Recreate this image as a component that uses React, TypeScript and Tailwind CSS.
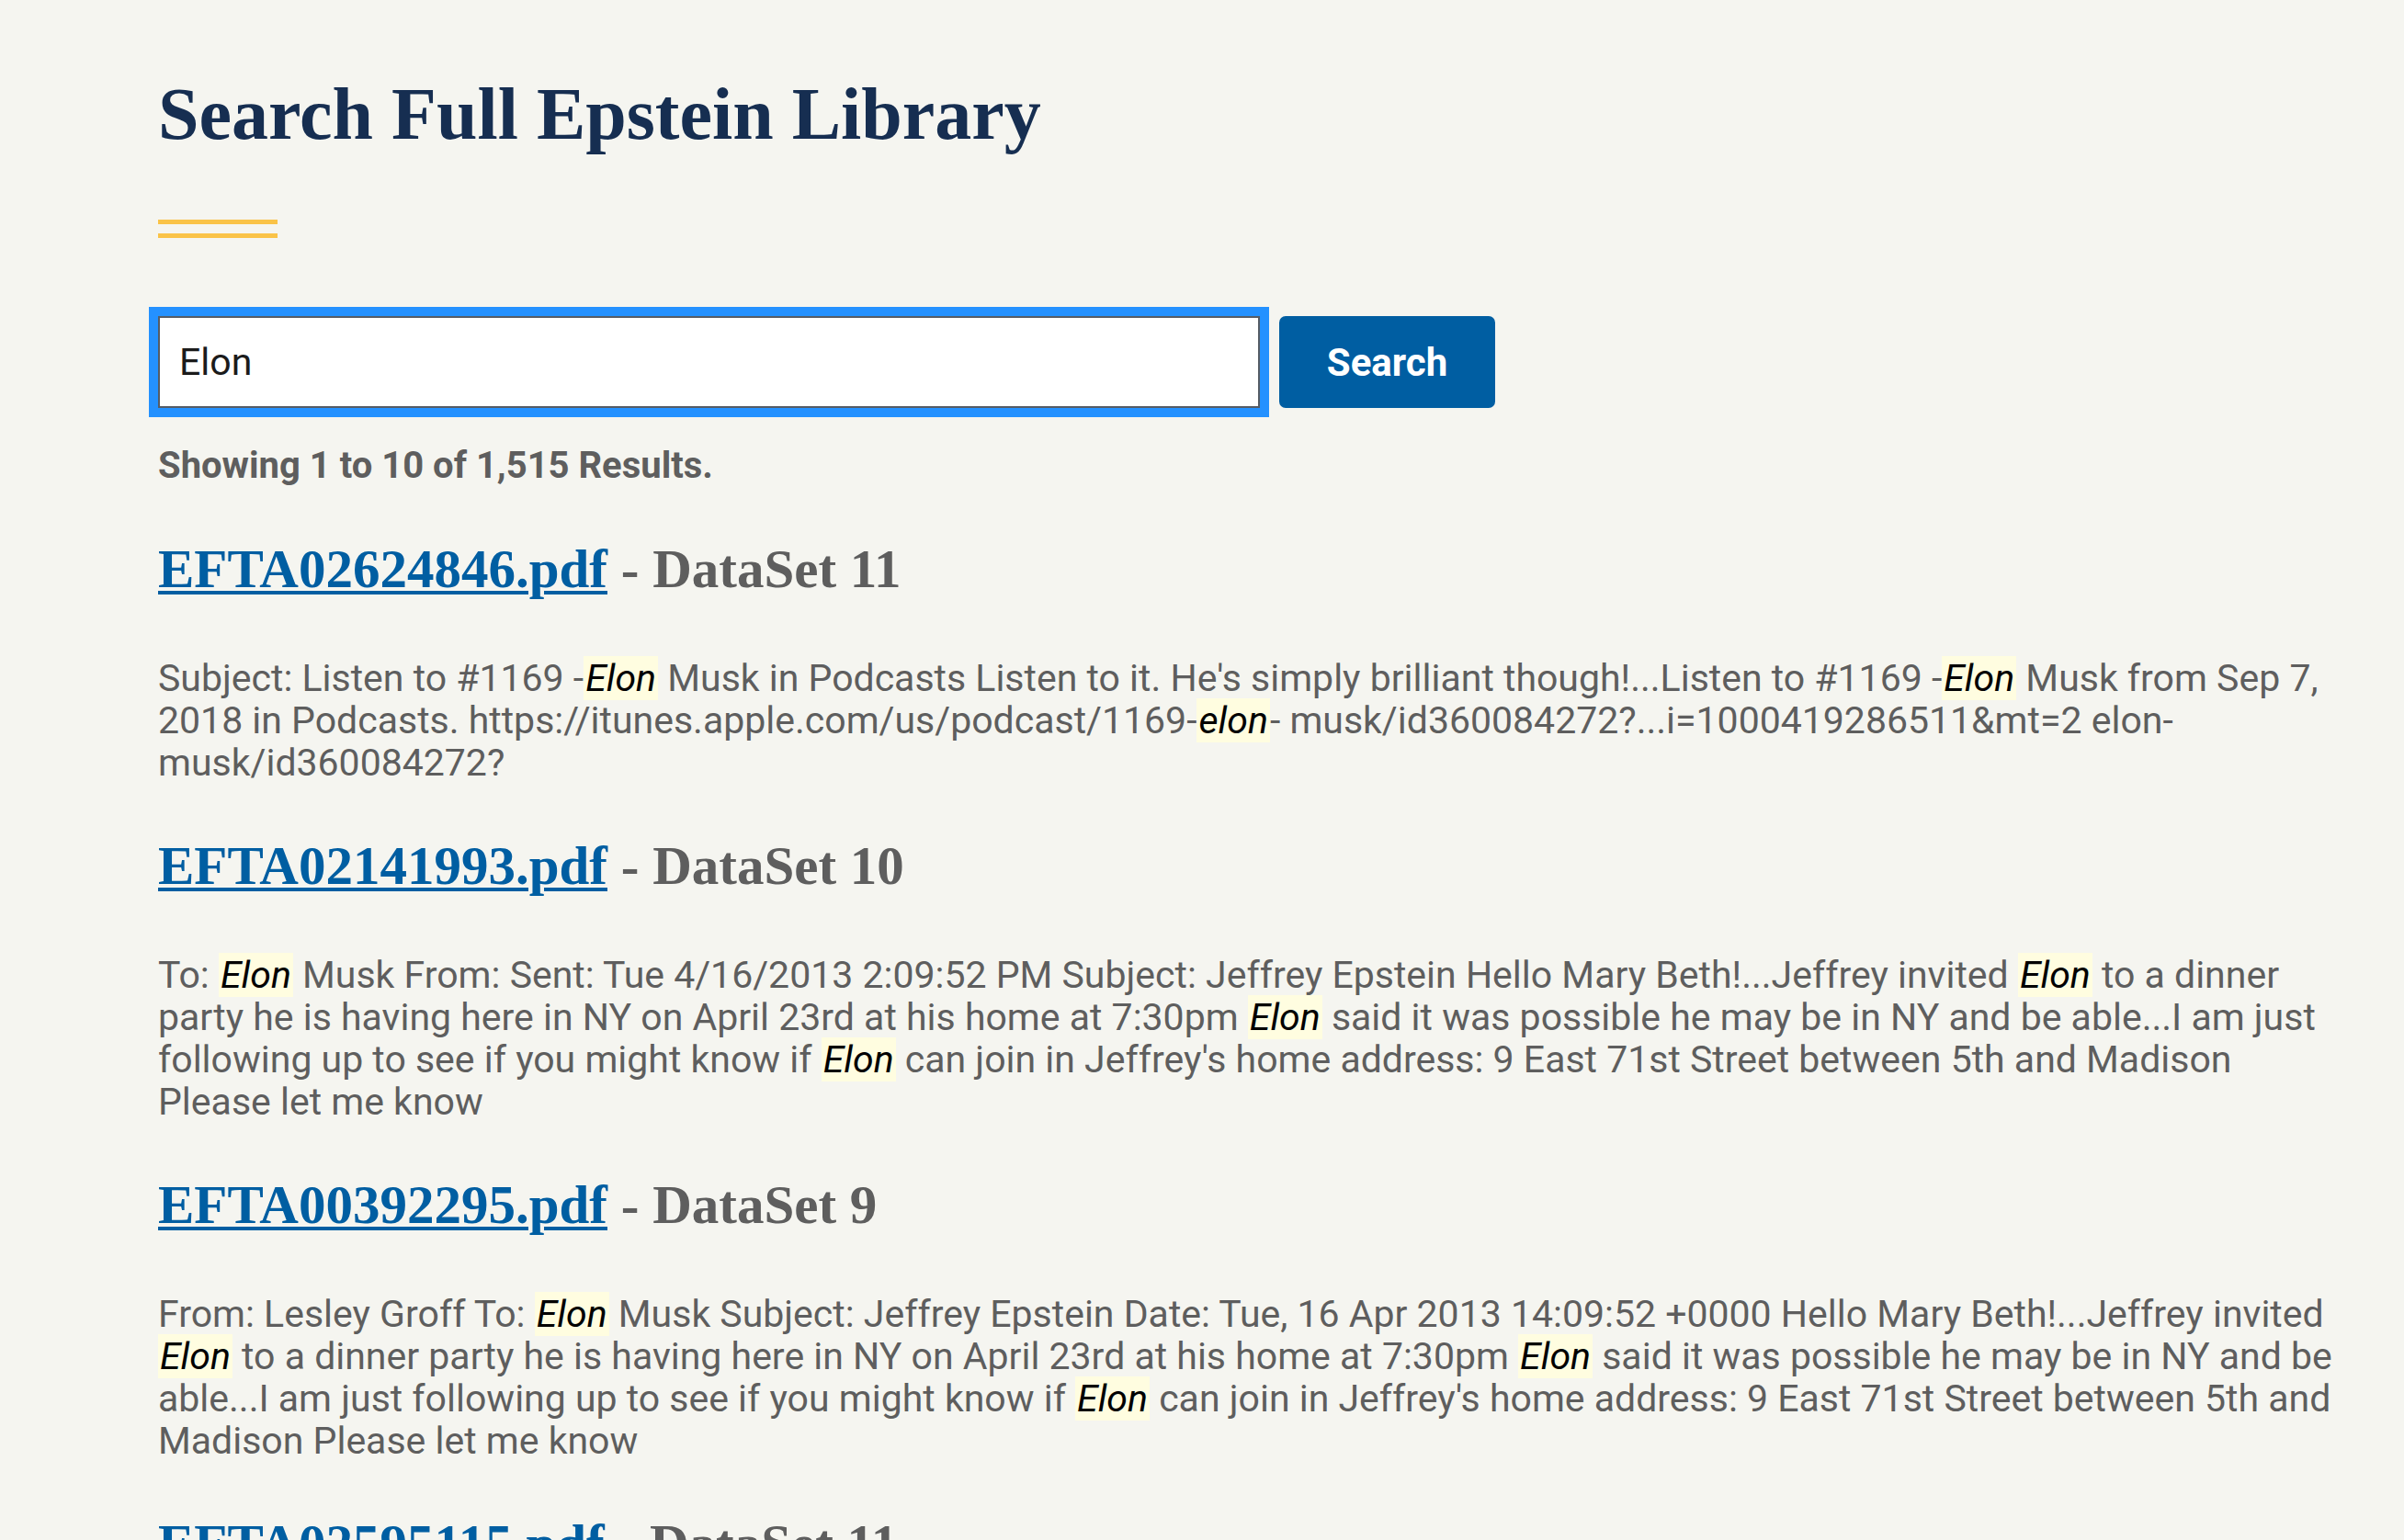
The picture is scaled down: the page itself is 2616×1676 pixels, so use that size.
import React from 'react';

type Part = string | { hl: string };

const results: { file: string; dataset: string; parts: Part[] }[] = [
  {
    file: 'EFTA02624846.pdf',
    dataset: 'DataSet 11',
    parts: [
      'Subject: Listen to #1169 -',
      { hl: 'Elon' },
      " Musk in Podcasts Listen to it. He's simply brilliant though!...Listen to #1169 -",
      { hl: 'Elon' },
      ' Musk from Sep 7, 2018 in Podcasts. https://itunes.apple.com/us/podcast/1169-',
      { hl: 'elon' },
      '- musk/id360084272?...i=1000419286511&mt=2 elon-musk/id360084272?',
    ],
  },
  {
    file: 'EFTA02141993.pdf',
    dataset: 'DataSet 10',
    parts: [
      'To: ',
      { hl: 'Elon' },
      ' Musk From: Sent: Tue 4/16/2013 2:09:52 PM Subject: Jeffrey Epstein Hello Mary Beth!...Jeffrey invited ',
      { hl: 'Elon' },
      ' to a dinner party he is having here in NY on April 23rd at his home at 7:30pm ',
      { hl: 'Elon' },
      ' said it was possible he may be in NY and be able...I am just following up to see if you might know if ',
      { hl: 'Elon' },
      " can join in Jeffrey's home address: 9 East 71st Street between 5th and Madison Please let me know",
    ],
  },
  {
    file: 'EFTA00392295.pdf',
    dataset: 'DataSet 9',
    parts: [
      'From: Lesley Groff To: ',
      { hl: 'Elon' },
      ' Musk Subject: Jeffrey Epstein Date: Tue, 16 Apr 2013 14:09:52 +0000 Hello Mary Beth!...Jeffrey invited ',
      { hl: 'Elon' },
      ' to a dinner party he is having here in NY on April 23rd at his home at 7:30pm ',
      { hl: 'Elon' },
      ' said it was possible he may be in NY and be able...I am just following up to see if you might know if ',
      { hl: 'Elon' },
      " can join in Jeffrey's home address: 9 East 71st Street between 5th and Madison Please let me know",
    ],
  },
  {
    file: 'EFTA02595115.pdf',
    dataset: 'DataSet 11',
    parts: ['Subject: ', { hl: 'Elon' }, ' Musk'],
  },
];

function Snippet({ parts }: { parts: Part[] }) {
  return (
    <p className="mt-[60px] text-[41px] leading-[46px] text-[#5e5e5e]">
      {parts.map((p, i) =>
        typeof p === 'string' ? (
          <React.Fragment key={i}>{p}</React.Fragment>
        ) : (
          <mark key={i} className="bg-[#fffde0] px-[2px] italic text-black">
            {p.hl}
          </mark>
        ),
      )}
    </p>
  );
}

export default function App() {
  return (
    <div className="min-h-screen bg-[#f5f5f0] pl-[172px] pt-[77px] font-['Roboto',sans-serif]">
      <div className="w-[2375px]">
        <h1 className="font-['Liberation_Serif',serif] text-[80px] font-bold leading-[94px] text-[#162e51]">
          Search Full Epstein Library
        </h1>

        {/* double gold rule */}
        <div className="mt-[68px] flex w-[130px] flex-col gap-[10px]">
          <div className="h-[5px] bg-[#fac348]" />
          <div className="h-[5px] bg-[#fac348]" />
        </div>

        <form className="mt-[85px] flex items-start gap-[21px]" onSubmit={(e) => e.preventDefault()}>
          <input
            type="text"
            defaultValue="Elon"
            className="h-[100px] w-[1199px] border-2 border-[#565c65] bg-white px-[21px] text-[41px] text-[#1b1b1b] shadow-[0_0_0_10px_#2491ff] outline-none"
          />
          <button
            type="submit"
            className="h-[100px] w-[235px] rounded-[7px] bg-[#005ea2] text-[42px] font-bold text-white"
          >
            Search
          </button>
        </form>

        <p className="mt-[39px] text-[40px] font-bold leading-[48px] text-[#5e5e5e]">
          Showing 1 to 10 of 1,515 Results.
        </p>

        <div className="mt-[53px] flex flex-col gap-[54px]">
          {results.map((r) => (
            <div key={r.file}>
              <h2 className="font-['Liberation_Serif',serif] text-[59px] font-bold leading-[71px] text-[#5e5e5e]">
                <a href="#" className="text-[#005ea2] underline decoration-4 underline-offset-4">
                  {r.file}
                </a>{' '}
                - {r.dataset}
              </h2>
              <Snippet parts={r.parts} />
            </div>
          ))}
        </div>
      </div>
    </div>
  );
}
